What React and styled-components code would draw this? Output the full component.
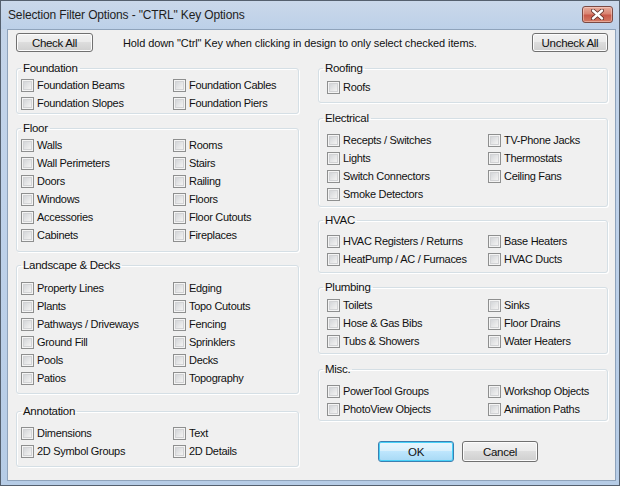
import React, { useState } from 'react';
import styled, { createGlobalStyle } from 'styled-components';

const leftGroups = [
  { title: 'Foundation', top: 1, bottom: 1, space: 0, items: ['Foundation Beams', 'Foundation Cables', 'Foundation Slopes', 'Foundation Piers'] },
  { title: 'Floor', top: 1, bottom: 7, space: 7, items: ['Walls', 'Rooms', 'Wall Perimeters', 'Stairs', 'Doors', 'Railing', 'Windows', 'Floors', 'Accessories', 'Floor Cutouts', 'Cabinets', 'Fireplaces'] },
  { title: 'Landscape & Decks', top: 7, bottom: 6, space: 6, items: ['Property Lines', 'Edging', 'Plants', 'Topo Cutouts', 'Pathways / Driveways', 'Fencing', 'Ground Fill', 'Sprinklers', 'Pools', 'Decks', 'Patios', 'Topography'] },
  { title: 'Annotation', top: 6, bottom: 6, space: 10, items: ['Dimensions', 'Text', '2D Symbol Groups', '2D Details'] },
];

const rightGroups = [
  { title: 'Roofing', top: 3, bottom: 6, space: 0, items: ['Roofs'] },
  { title: 'Electrical', top: 6, bottom: 3, space: 8, items: ['Recepts / Switches', 'TV-Phone Jacks', 'Lights', 'Thermostats', 'Switch Connectors', 'Ceiling Fans', 'Smoke Detectors'] },
  { title: 'HVAC', top: 5, bottom: 4, space: 6, items: ['HVAC Registers / Returns', 'Base Heaters', 'HeatPump / AC / Furnaces', 'HVAC Ducts'] },
  { title: 'Plumbing', top: 2, bottom: 3, space: 7, items: ['Toilets', 'Sinks', 'Hose & Gas Bibs', 'Floor Drains', 'Tubs & Showers', 'Water Heaters'] },
  { title: 'Misc.', top: 6, bottom: 2, space: 8, items: ['PowerTool Groups', 'Workshop Objects', 'PhotoView Objects', 'Animation Paths'] },
];

const allItems = [...leftGroups, ...rightGroups].flatMap((g) => g.items);

const Group = ({ group, indent, col, checked, onToggle }) => (
  <Box $space={group.space} $top={group.top} $bottom={group.bottom}>
    <Legend>{group.title}</Legend>
    <Rows $indent={indent} $col={col}>
      {group.items.map((item) => (
        <Option key={item} onClick={() => onToggle(item)}>
          <Check $on={checked.includes(item)} />
          <span>{item}</span>
        </Option>
      ))}
    </Rows>
  </Box>
);

const App = () => {
  const [checked, setChecked] = useState([]);

  const toggle = (item) => {
    if (checked.includes(item)) {
      setChecked(checked.filter((c) => c !== item));
    } else {
      setChecked([...checked, item]);
    }
  };

  return <>
    <GlobalStyle />
    <Window>
      <TitleBar>
        <Title>Selection Filter Options - "CTRL" Key Options</Title>
        <CloseButton>
          <svg width="13" height="11" viewBox="0 0 13 11">
            <path d="M2 1.5 L11 9.5 M11 1.5 L2 9.5" stroke="#5a2a24" strokeWidth="4" strokeLinecap="round" />
            <path d="M2 1.5 L11 9.5 M11 1.5 L2 9.5" stroke="#ffffff" strokeWidth="2.4" strokeLinecap="round" />
          </svg>
        </CloseButton>
      </TitleBar>
      <Body>
        <TopRow>
          <Button $w={77} onClick={() => setChecked(allItems)}>Check All</Button>
          <Hint>Hold down "Ctrl" Key when clicking in design to only select checked items.</Hint>
          <Button $w={76} onClick={() => setChecked([])}>Uncheck All</Button>
        </TopRow>
        <Columns>
          <Column>
            {leftGroups.map((g) => (
              <Group key={g.title} group={g} indent={0} col={152} checked={checked} onToggle={toggle} />
            ))}
          </Column>
          <Column>
            {rightGroups.map((g) => (
              <Group key={g.title} group={g} indent={4} col={161} checked={checked} onToggle={toggle} />
            ))}
            <Actions>
              <Button $w={76} $h={21} $primary>OK</Button>
              <Button $w={76} $h={21}>Cancel</Button>
            </Actions>
          </Column>
        </Columns>
      </Body>
    </Window>
  </>;
};

const GlobalStyle = createGlobalStyle`
html, body {
  margin:0;
  padding:0;
  background:#ffffff;
}
`

const Window = styled.div`
width:620px;
height:486px;
box-sizing:border-box;
display:flex;
flex-flow:column nowrap;
border:1px solid #55606e;
background:linear-gradient(#c4d4e8, #bfd2ea 40%, #b6cce6);
padding:0 3px 4px 6px;
font-family:"Liberation Sans", Arial, sans-serif;
`

const TitleBar = styled.div`
height:28px;
display:flex;
flex-flow:row nowrap;
align-items:center;
justify-content:space-between;
padding:0 5px 4px 7px;
box-sizing:border-box;
background:linear-gradient(#cad8ea, #bcd0e8);
margin:0 -3px 0 -6px;
`

const Title = styled.div`
font-size:12px;
color:#1e1e1e;
letter-spacing:-0.15px;
padding-top:3px;
`

const CloseButton = styled.div`
width:31px;
height:17px;
box-sizing:border-box;
margin-top:3px;
margin-right:1px;
display:flex;
align-items:center;
justify-content:center;
border:1px solid #7a4a44;
border-radius:3px;
background:linear-gradient(#e6ab9c, #d98472 45%, #c9594a 55%, #d27a63);
box-shadow:inset 0 0 0 1px rgba(255,225,215,0.45);
`

const Body = styled.div`
flex:1;
display:flex;
flex-flow:column nowrap;
background:#f0f0f0;
border:1px solid #8fa3bb;
padding:3px 7px 0 8px;
font-size:11px;
letter-spacing:-0.3px;
color:#111111;
`

const TopRow = styled.div`
display:flex;
flex-flow:row nowrap;
align-items:center;
`

const Hint = styled.div`
flex:1;
padding-left:30px;
letter-spacing:-0.1px;
`

const Button = styled.button`
width:${(p) => p.$w}px;
height:${(p) => p.$h || 19}px;
padding:0;
font-family:inherit;
font-size:11.5px;
letter-spacing:-0.3px;
color:#111111;
border:1px solid ${(p) => (p.$primary ? '#3c7fb1' : '#707070')};
border-radius:3px;
background:${(p) => (p.$primary
    ? 'linear-gradient(#eaf6fd, #d9f0fc 45%, #bee6fd 50%, #a7d9f5)'
    : 'linear-gradient(#f2f2f2, #ebebeb 45%, #dddddd 50%, #cfcfcf)')};
box-shadow:inset 0 0 0 1px ${(p) => (p.$primary ? '#48d1f8' : '#fcfcfc')};
`

const Columns = styled.div`
display:grid;
grid-template-columns:283px 290px;
column-gap:19px;
margin-top:9px;
align-items:start;
`

const Column = styled.div`
display:flex;
flex-flow:column nowrap;
`

const Box = styled.fieldset`
margin:${(p) => p.$space}px 0 0 0;
padding:${(p) => p.$top}px 4px ${(p) => p.$bottom}px 4px;
border:1px solid #d5dfe5;
border-radius:3px;
box-shadow:inset 1px 1px 0 #ffffff, 1px 1px 0 #ffffff;
min-width:0;
`

const Legend = styled.legend`
padding:0 2px;
font-size:11.5px;
line-height:14px;
color:#111111;
`

const Rows = styled.div`
display:grid;
grid-template-columns:${(p) => p.$col}px 1fr;
padding-left:${(p) => p.$indent}px;
`

const Option = styled.div`
height:18px;
display:flex;
flex-flow:row nowrap;
align-items:center;
gap:3px;
white-space:nowrap;
cursor:default;
`

const Check = styled.span`
width:13px;
height:13px;
box-sizing:border-box;
flex:none;
border:1px solid #8e8f8f;
background:linear-gradient(135deg, #cbced2, #eeeeee 70%, #f6f6f6);
box-shadow:inset 0 0 0 1px #f4f4f4, inset 0 0 0 2px #d2d3d5;
position:relative;

&::after{
  content:${(p) => (p.$on ? '"\\2713"' : 'none')};
  position:absolute;
  left:1px;
  top:-2px;
  font-size:11px;
  font-weight:bold;
  color:#1c3e6c;
}
`

const Actions = styled.div`
display:flex;
flex-flow:row nowrap;
justify-content:center;
gap:8px;
margin-top:20px;
padding-right:10px;
`

export default App;
